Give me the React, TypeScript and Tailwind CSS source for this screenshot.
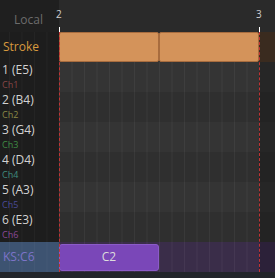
import React from "react";

const strings = [
  { n: "1 (E5)", ch: "Ch1", c: "text-[#874646]" },
  { n: "2 (B4)", ch: "Ch2", c: "text-[#8a8a46]" },
  { n: "3 (G4)", ch: "Ch3", c: "text-[#3f8c44]" },
  { n: "4 (D4)", ch: "Ch4", c: "text-[#3f8c7e]" },
  { n: "5 (A3)", ch: "Ch5", c: "text-[#4a4a98]" },
  { n: "6 (E3)", ch: "Ch6", c: "text-[#8a4896]" },
];

const gridLines =
  "bg-[linear-gradient(to_right,#ffffff0d_1px,transparent_1px)] bg-[length:12.5px_100%]";
const leftLines =
  "bg-[linear-gradient(to_right,#ffffff08_1px,transparent_1px)] bg-[length:12.5px_100%] bg-right";

export default function App() {
  return (
    <div
      className="relative w-[275px] h-[278px] overflow-hidden bg-[#232323] flex flex-col"
      style={{ fontFamily: '"Open Sans", "Noto Sans", sans-serif' }}
    >
      {/* header */}
      <div className="flex h-[32px] shrink-0">
        <div className="w-[59px] bg-[#1f1f1f] flex items-end justify-end pr-[16px] pb-[3px]">
          <span className="text-[12px] leading-none text-[#6c6c6c] mb-[3px]">Local</span>
        </div>
        <div className="flex-1 bg-[#2a2a2a] relative">
          <span className="absolute left-[-3px] top-[7px] text-[10px] leading-[14px] text-[#d0d0d0]">2</span>
          <span className="absolute left-[197px] top-[7px] text-[10px] leading-[14px] text-[#d0d0d0]">3</span>
          <div className="absolute left-0 bottom-0 w-px h-[5px] bg-white" />
          <div className="absolute left-[200px] bottom-0 w-px h-[5px] bg-white" />
        </div>
      </div>

      {/* stroke row */}
      <div className="flex h-[30px] shrink-0">
        <div className={`w-[59px] bg-[#1d1d1d] ${leftLines} flex items-center pl-[3px]`}>
          <span className="text-[12px] leading-none text-[#d89a3e]">Stroke</span>
        </div>
        <div className="w-[200px] bg-[#2e2e2e] flex">
          <div className="w-[100px] h-full bg-[#d4935a] border border-[#a86c3e] rounded-[2px]" />
          <div className="w-[100px] h-full bg-[#d4935a] border border-[#a86c3e] rounded-[2px]" />
        </div>
        <div className="flex-1 bg-[#3a2b1f]" />
      </div>

      {/* string rows */}
      {strings.map((s, i) => (
        <div key={s.ch} className="flex h-[30px] shrink-0">
          <div className={`w-[59px] bg-[#1d1d1d] ${leftLines} flex flex-col gap-[2px] pl-[2px] pt-[1px]`}>
            <span className="text-[12px] leading-[14px] text-[#d2d2d2]">{s.n}</span>
            <span className={`text-[9px] leading-[11px] ${s.c}`}>{s.ch}</span>
          </div>
          <div
            className={`w-[200px] ${i % 2 === 0 ? "bg-[#343434]" : "bg-[#2f2f2f]"} ${gridLines}`}
          />
          <div className={`flex-1 ${i % 2 === 0 ? "bg-[#262626]" : "bg-[#232323]"}`} />
        </div>
      ))}

      {/* KS row */}
      <div className="flex h-[30px] shrink-0">
        <div className={`w-[59px] bg-[#3d5371] ${leftLines} flex items-center pl-[3px]`}>
          <span className="text-[12px] leading-none text-[#7c74c8]">KS:C6</span>
        </div>
        <div className={`w-[200px] bg-[#3a2d49] ${gridLines} flex items-center`}>
          <div className="w-[100px] h-[27px] bg-[#7a47b8] border border-[#8b5bc8] rounded-[3px] flex items-center justify-center">
            <span className="text-[12px] leading-none text-[#dcdcdc]">C2</span>
          </div>
        </div>
        <div className="flex-1 bg-[#2c2139]" />
      </div>

      {/* bottom strip */}
      <div className="flex-1 bg-[#22252a]" />

      {/* loop markers */}
      <div className="absolute left-[59px] top-[32px] h-[240px] border-l border-dashed border-[#c23434]" />
      <div className="absolute left-[259px] top-[32px] h-[240px] border-l border-dashed border-[#c23434]" />
    </div>
  );
}
